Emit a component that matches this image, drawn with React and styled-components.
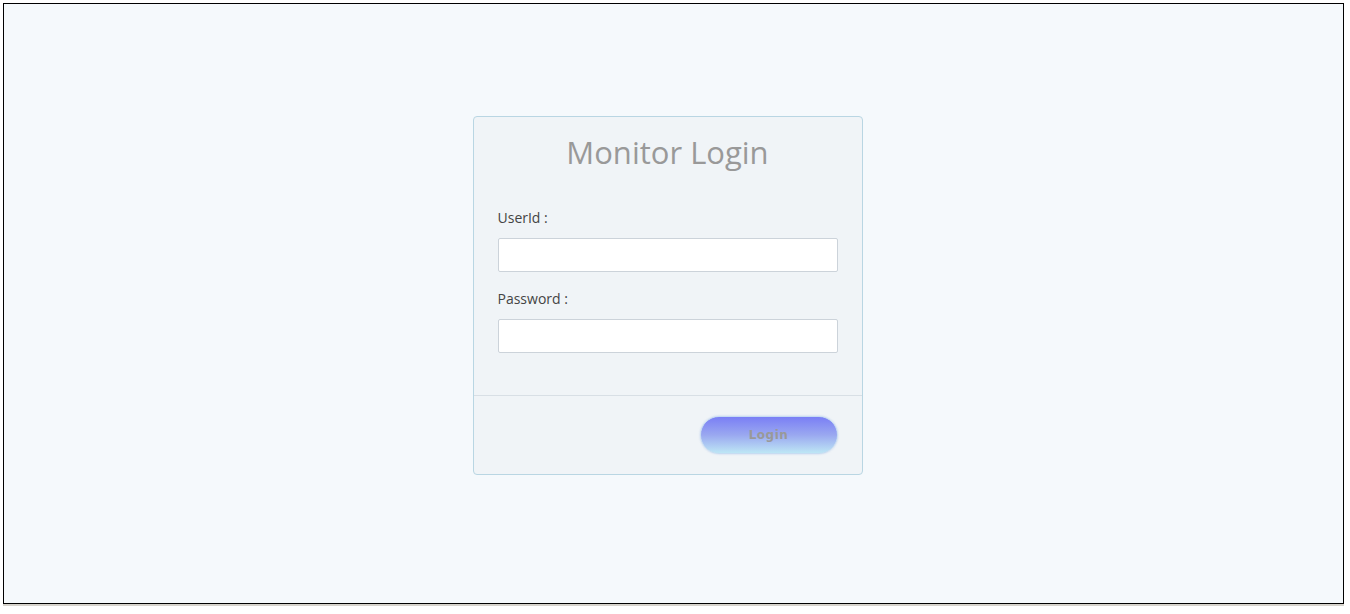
import styled, { createGlobalStyle } from 'styled-components';

const GlobalStyle = createGlobalStyle`
  html, body {
    margin: 0;
    padding: 0;
    background: #ffffff;
  }
  * {
    box-sizing: border-box;
  }
`;

const Screen = styled.div`
  width: 1350px;
  height: 614px;
  overflow: hidden;
  padding: 3px 0 0 3px;
`;

const Frame = styled.div`
  width: 1341px;
  height: 601px;
  border: 1px solid #000;
  background: #f5f9fc;
  display: flex;
  justify-content: center;
  align-items: flex-start;
  padding: 112px 12px 0 0;
`;

const BottomBar = styled.div`
  width: 1341px;
  height: 2px;
  background: #d6d3cc;
`;

const Card = styled.div`
  width: 390px;
  height: 359px;
  border: 1px solid #b9d6e3;
  border-radius: 4px;
  background: #f0f4f7;
  display: flex;
  flex-direction: column;
`;

const Body = styled.div`
  padding: 15px 24px 0 24px;
  height: 279px;
  border-bottom: 1px solid #d8dfe5;
`;

const Title = styled.h1`
  margin: 0 0 36px 0;
  text-align: center;
  font-family: "Open Sans", sans-serif;
  font-weight: 400;
  font-size: 31px;
  line-height: 40px;
  color: #999999;
`;

const Label = styled.label`
  display: block;
  font-family: "Open Sans", sans-serif;
  font-size: 14px;
  line-height: 20px;
  color: #444444;
  margin-bottom: 10px;
`;

const Field = styled.div`
  margin-bottom: 17px;
`;

const Input = styled.input`
  display: block;
  width: 340px;
  height: 34px;
  border: 1px solid #ccd3da;
  border-radius: 2px;
  background: #ffffff;
  outline: none;
  padding: 0 8px;
`;

const Footer = styled.div`
  flex: 1;
  display: flex;
  justify-content: flex-end;
  align-items: flex-start;
  padding: 20px 24px 0 0;
`;

const LoginButton = styled.button`
  width: 138px;
  height: 38px;
  border-radius: 19px;
  border: 1px solid #c6dcf2;
  background: linear-gradient(to bottom, #7a7ff5 0%, #9aa8f0 50%, #bde6f5 100%);
  box-shadow: 0 0 2px rgba(150, 180, 230, 0.6);
  font-family: "DejaVu Sans", Verdana, sans-serif;
  font-weight: bold;
  font-size: 12px;
  letter-spacing: 0.5px;
  color: #999999;
  cursor: pointer;
  padding: 0;
`;

export default function App() {
  return (
    <>
      <GlobalStyle />
      <Screen>
        <Frame>
          <Card>
            <Body>
              <Title>Monitor Login</Title>
              <Field>
                <Label htmlFor="userId">UserId :</Label>
                <Input id="userId" type="text" />
              </Field>
              <Field>
                <Label htmlFor="password">Password :</Label>
                <Input id="password" type="password" />
              </Field>
            </Body>
            <Footer>
              <LoginButton type="button">Login</LoginButton>
            </Footer>
          </Card>
        </Frame>
        <BottomBar />
      </Screen>
    </>
  );
}
